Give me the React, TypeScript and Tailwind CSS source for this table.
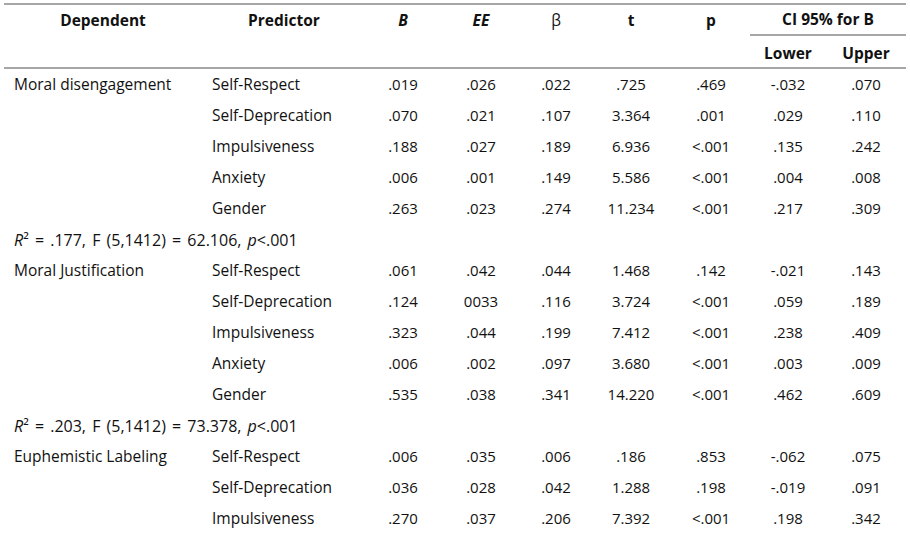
const font = { fontFamily: '"Open Sans", "Noto Sans", sans-serif' };

type Row = { dep?: string; pred: string; vals: string[] };

const groups: { rows: Row[]; stat?: [string, string] }[] = [
  {
    rows: [
      { dep: "Moral disengagement", pred: "Self-Respect", vals: [".019", ".026", ".022", ".725", ".469", "-.032", ".070"] },
      { pred: "Self-Deprecation", vals: [".070", ".021", ".107", "3.364", ".001", ".029", ".110"] },
      { pred: "Impulsiveness", vals: [".188", ".027", ".189", "6.936", "<.001", ".135", ".242"] },
      { pred: "Anxiety", vals: [".006", ".001", ".149", "5.586", "<.001", ".004", ".008"] },
      { pred: "Gender", vals: [".263", ".023", ".274", "11.234", "<.001", ".217", ".309"] },
    ],
    stat: [".177", "62.106"],
  },
  {
    rows: [
      { dep: "Moral Justification", pred: "Self-Respect", vals: [".061", ".042", ".044", "1.468", ".142", "-.021", ".143"] },
      { pred: "Self-Deprecation", vals: [".124", "0033", ".116", "3.724", "<.001", ".059", ".189"] },
      { pred: "Impulsiveness", vals: [".323", ".044", ".199", "7.412", "<.001", ".238", ".409"] },
      { pred: "Anxiety", vals: [".006", ".002", ".097", "3.680", "<.001", ".003", ".009"] },
      { pred: "Gender", vals: [".535", ".038", ".341", "14.220", "<.001", ".462", ".609"] },
    ],
    stat: [".203", "73.378"],
  },
  {
    rows: [
      { dep: "Euphemistic Labeling", pred: "Self-Respect", vals: [".006", ".035", ".006", ".186", ".853", "-.062", ".075"] },
      { pred: "Self-Deprecation", vals: [".036", ".028", ".042", "1.288", ".198", "-.019", ".091"] },
      { pred: "Impulsiveness", vals: [".270", ".037", ".206", "7.392", "<.001", ".198", ".342"] },
    ],
  },
];

const line = "border-[#a6a6a6]";

export default function App() {
  return (
    <div className="min-h-screen bg-white pl-1 pt-[3px] text-[15px] text-[#111]" style={font}>
      <table className="w-[902px] table-fixed border-separate border-spacing-0">
        <colgroup>
          <col className="w-[198px]" />
          <col className="w-[164px]" />
          <col className="w-[74px]" />
          <col className="w-[82px]" />
          <col className="w-[68px]" />
          <col className="w-[82px]" />
          <col className="w-[78px]" />
          <col className="w-[76px]" />
          <col className="w-[80px]" />
        </colgroup>
        <thead className="text-[15.5px]">
          <tr className="h-[33px]">
            <th className={`border-t-2 ${line} font-bold`}>Dependent</th>
            <th className={`border-t-2 ${line} font-bold`}>Predictor</th>
            <th className={`border-t-2 ${line} font-bold italic`}>B</th>
            <th className={`border-t-2 ${line} font-bold italic`}>EE</th>
            <th className={`border-t-2 ${line} font-medium`}>β</th>
            <th className={`border-t-2 ${line} font-bold`}>t</th>
            <th className={`border-t-2 ${line} font-bold`}>p</th>
            <th colSpan={2} className={`border-t-2 border-b-2 ${line} font-bold`}>
              CI 95% for B
            </th>
          </tr>
          <tr className="h-[33px]">
            <th colSpan={7} className={`border-b-2 ${line}`} />
            <th className={`border-b-2 ${line} pt-[4px] font-bold`}>Lower</th>
            <th className={`border-b-2 ${line} pt-[4px] font-bold`}>Upper</th>
          </tr>
        </thead>
        <tbody>
          {groups.map((g, gi) => (
            <Group key={gi} rows={g.rows} stat={g.stat} />
          ))}
        </tbody>
      </table>
    </div>
  );
}

function Group({ rows, stat }: { rows: Row[]; stat?: [string, string] }) {
  return (
    <>
      {rows.map((r, i) => (
        <tr key={i} className="h-[31px]">
          <td className="pl-[10px] text-[15.5px] whitespace-nowrap">{r.dep ?? ""}</td>
          <td className="pl-[10px] text-[15.5px] whitespace-nowrap">{r.pred}</td>
          {r.vals.map((v, j) => (
            <td key={j} className="text-center">
              {v}
            </td>
          ))}
        </tr>
      ))}
      {stat && (
        <tr className="h-[31px]">
          <td colSpan={9} className="pl-[10px] text-[16px] [word-spacing:2px]">
            <i>R</i>² = {stat[0]}, F (5,1412) = {stat[1]}, <i>p</i>&lt;.001
          </td>
        </tr>
      )}
    </>
  );
}
